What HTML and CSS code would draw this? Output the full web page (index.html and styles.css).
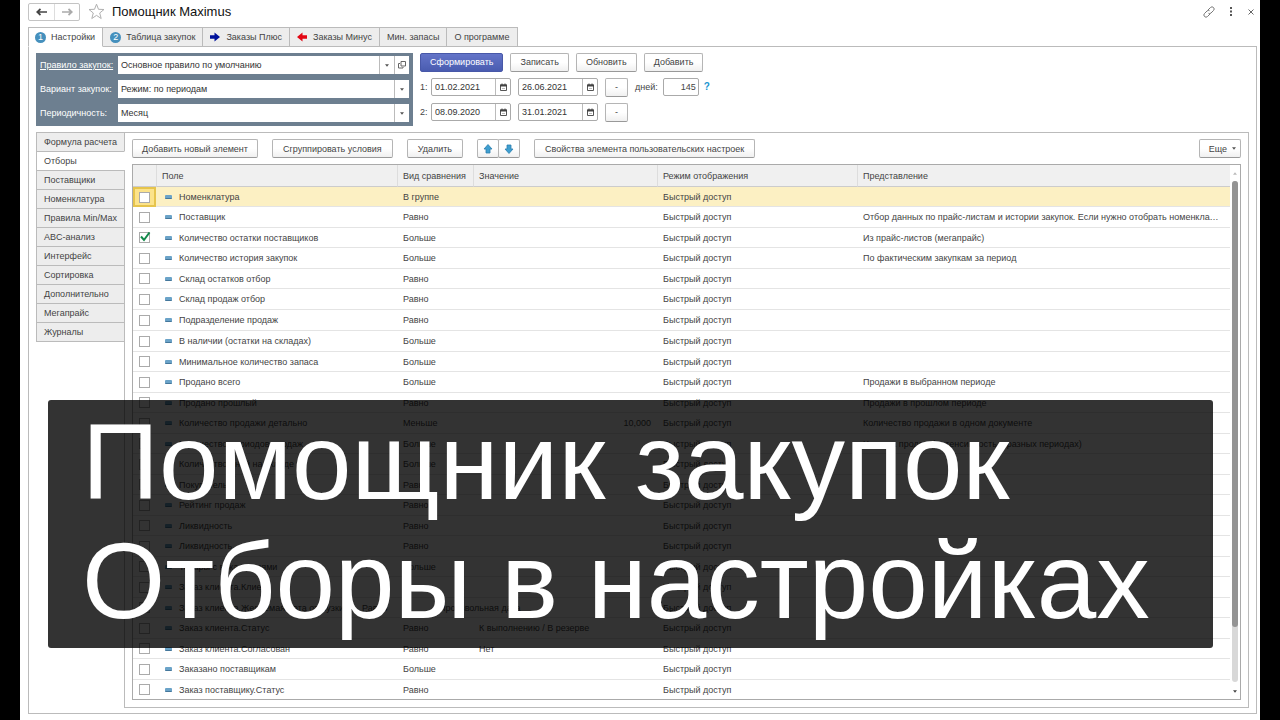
FILE: index.html
```html
<!DOCTYPE html>
<html lang="ru">
<head>
<meta charset="utf-8">
<title>Помощник Maximus</title>
<link rel="stylesheet" href="styles.css">
</head>
<body>
<svg class="defs" aria-hidden="true">
  <symbol id="caret" viewBox="0 0 5 3"><path d="M0 0h5L2.5 3z" fill="currentColor"/></symbol>
  <symbol id="cal" viewBox="0 0 9 9"><path d="M1.500 2h6v5.500h-6z" fill="#fff" stroke="#555"/><path d="M1 1.500h7v2H1z" fill="#444"/><path d="M3 .5v2M6 .5v2" stroke="#444"/><path d="M3 5.500h3" stroke="#bbb"/></symbol>
  <symbol id="up" viewBox="0 0 10 10"><path d="M5 .5 9 5H7v4H3V5H1z" fill="#3f9fd0" stroke="#2b7fae" stroke-width=".8"/></symbol>
  <symbol id="arrow" viewBox="0 0 10 10"><path d="M0 3.200h4.500V.5L10 5 4.500 9.500V6.800H0z" fill="currentColor"/></symbol>
  <symbol id="nav" viewBox="0 0 11 8"><path d="M1 4h10M4.500 1 1.200 4l3.300 3" fill="none" stroke="currentColor" stroke-width="1.700"/></symbol>
</svg>
<div class="app">
  <header class="title-bar">
    <div class="nav-group">
      <button class="nav" aria-label="Назад"><svg class="i-nav"><use href="#nav"/></svg></button>
      <button class="nav nav-off" aria-label="Вперед"><svg class="i-nav flip"><use href="#nav"/></svg></button>
    </div>
    <svg class="star" viewBox="0 0 17 17"><path d="M8.500 1.200 10.500 6.300 16 6.500 11.700 10 13.200 15.500 8.500 12.400 3.800 15.500 5.300 10 1 6.500 6.500 6.300z" fill="#fff" stroke="#b0b0b0"/></svg>
    <h1>Помощник Maximus</h1>
    <div class="window-tools">
      <button class="tool" aria-label="Ссылка"><svg class="i-link" viewBox="0 0 12 12" fill="none" stroke="#777"><path d="M5 4 7.500 1.500a2.100 2.100 0 0 1 3 3L8 7a2 2 0 0 1-2.500.3M7 8 4.500 10.500a2.100 2.100 0 0 1-3-3L4 5a2 2 0 0 1 2.500-.3"/></svg></button>
      <button class="tool" aria-label="Меню"><svg class="i-more" viewBox="0 0 3 10" fill="#555"><path d="M0 0h2v2H0zM0 3.500h2v2H0zM0 7h2v2H0z"/></svg></button>
      <button class="tool" aria-label="Закрыть"><svg class="i-close" viewBox="0 0 6 6"><path d="m.5.5 5 5m0-5-5 5" stroke="#666"/></svg></button>
    </div>
  </header>
  <nav class="tabs" role="tablist">
    <button class="tab tab-on" role="tab"><span class="num">1</span>Настройки</button>
    <button class="tab" role="tab"><span class="num">2</span>Таблица закупок</button>
    <button class="tab" role="tab"><svg class="i-arrow blue"><use href="#arrow"/></svg>Заказы Плюс</button>
    <button class="tab" role="tab"><svg class="i-arrow red flip"><use href="#arrow"/></svg>Заказы Минус</button>
    <button class="tab" role="tab">Мин. запасы</button>
    <button class="tab" role="tab">О программе</button>
  </nav>
  <main class="page">
    <section class="settings">
      <div class="rules">
        <label class="link" for="rule">Правило закупок:</label>
        <div class="combo">
          <input id="rule" type="text" value="Основное правило по умолчанию">
          <button class="cell" aria-label="Выбрать"><svg class="i-caret"><use href="#caret"/></svg></button>
          <button class="cell" aria-label="Открыть"><svg class="i-open" viewBox="0 0 8 8" fill="none" stroke="#666"><path d="M3 .5h4.500V5H3zM2 2.500H.5v4.500H5V6"/></svg></button>
        </div>
        <label for="variant">Вариант закупок:</label>
        <div class="pick"><select id="variant"><option>Режим: по периодам</option></select><svg class="i-caret"><use href="#caret"/></svg></div>
        <label for="period">Периодичность:</label>
        <div class="pick"><select id="period"><option>Месяц</option></select><svg class="i-caret"><use href="#caret"/></svg></div>
      </div>
      <div class="actions">
        <div class="line top-line">
          <button class="btn primary">Сформировать</button>
          <button class="btn">Записать</button>
          <button class="btn">Обновить</button>
          <button class="btn">Добавить</button>
        </div>
        <div class="line">
          <label class="idx" for="d1">1:</label>
          <div class="date"><input id="d1" type="text" value="01.02.2021"><button class="cell" aria-label="Календарь"><svg class="i-cal"><use href="#cal"/></svg></button></div>
          <div class="date"><input type="text" aria-label="Конец периода 1" value="26.06.2021"><button class="cell" aria-label="Календарь"><svg class="i-cal"><use href="#cal"/></svg></button></div>
          <button class="btn dash">-</button>
          <label class="days" for="days">дней:</label>
          <input class="count" id="days" type="text" value="145">
          <button class="help">?</button>
        </div>
        <div class="line">
          <label class="idx" for="d2">2:</label>
          <div class="date"><input id="d2" type="text" value="08.09.2020"><button class="cell" aria-label="Календарь"><svg class="i-cal"><use href="#cal"/></svg></button></div>
          <div class="date"><input type="text" aria-label="Конец периода 2" value="31.01.2021"><button class="cell" aria-label="Календарь"><svg class="i-cal"><use href="#cal"/></svg></button></div>
          <button class="btn dash">-</button>
        </div>
      </div>
    </section>
    <section class="work">
      <nav class="side">
        <button class="side-tab">Формула расчета</button>
        <button class="side-tab side-on">Отборы</button>
        <button class="side-tab">Поставщики</button>
        <button class="side-tab">Номенклатура</button>
        <button class="side-tab">Правила Min/Max</button>
        <button class="side-tab">ABC-анализ</button>
        <button class="side-tab">Интерфейс</button>
        <button class="side-tab">Сортировка</button>
        <button class="side-tab">Дополнительно</button>
        <button class="side-tab">Мегапрайс</button>
        <button class="side-tab">Журналы</button>
      </nav>
      <div class="panel">
        <div class="toolbar">
          <button class="btn">Добавить новый элемент</button>
          <button class="btn">Сгруппировать условия</button>
          <button class="btn">Удалить</button>
          <div class="move">
            <button class="btn" aria-label="Вверх"><svg class="i-move"><use href="#up"/></svg></button>
            <button class="btn" aria-label="Вниз"><svg class="i-move down"><use href="#up"/></svg></button>
          </div>
          <button class="btn">Свойства элемента пользовательских настроек</button>
          <button class="btn more">Еще <svg class="i-caret"><use href="#caret"/></svg></button>
        </div>
        <div class="grid">
          <div class="view">
            <table>
              <colgroup><col class="c-check"><col class="c-field"><col class="c-kind"><col class="c-value"><col class="c-mode"><col></colgroup>
              <thead><tr><th></th><th>Поле</th><th>Вид сравнения</th><th>Значение</th><th>Режим отображения</th><th>Представление</th></tr></thead>
              <tbody id="rows"></tbody>
            </table>
          </div>
          <div class="scroll">
            <svg class="i-scroll faint flip-y"><use href="#caret"/></svg>
            <div class="track"><div class="thumb"></div></div>
            <svg class="i-scroll"><use href="#caret"/></svg>
          </div>
        </div>
      </div>
    </section>
  </main>
</div>
<div class="caption">Помощник закупок<br>Отборы в настройках</div>
<script src="rows.js"></script>
</body>
</html>
```
FILE: styles.css
```css
* { box-sizing: border-box; }
body { margin: 0; padding: 0 20px; background: #000; font: 9px/12px "Liberation Sans", Arial, sans-serif; color: #444; }
button, input, select { font: inherit; color: inherit; margin: 0; padding: 0; border: 0; background: none; border-radius: 0; }
svg { display: block; flex: none; }
.defs { position: absolute; width: 0; height: 0; }
.app { display: flex; flex-direction: column; height: 100vh; padding: 0 3px 6px 8px; background: #fff; }
.flip { transform: scaleX(-1); }
.flip-y, .down { transform: scaleY(-1); }

.title-bar { display: flex; align-items: center; height: 27px; padding: 0 3px 4px 0; }
.nav-group { display: flex; height: 18px; border: 1px solid #c4c4c4; border-radius: 2px; }
.nav { display: flex; align-items: center; justify-content: center; width: 25px; color: #444; }
.nav + .nav { border-left: 1px solid #ddd; }
.nav-off { color: #aaa; }
.i-nav { width: 11px; height: 8px; }
.star { width: 17px; height: 17px; margin: 0 7px 0 8px; }
h1 { margin: 0; font-size: 13px; line-height: 16px; font-weight: 400; color: #111; }
.window-tools { display: flex; align-items: center; gap: 15px; margin-left: auto; }
.i-link { width: 12px; height: 12px; }
.i-more { width: 3px; height: 10px; }
.i-close { width: 6px; height: 6px; }

.tabs { position: relative; z-index: 1; display: flex; height: 20px; }
.tab { display: flex; align-items: center; gap: 5px; padding: 0 7px; border: solid #bbb; border-width: 1px 1px 1px 0; background: #ededed; white-space: nowrap; }
.tab-on { padding-left: 6px; border-left-width: 1px; border-bottom-color: #fff; background: #fff; }
.num { width: 11px; height: 11px; border-radius: 50%; background: #4590bd; color: #fff; line-height: 11px; text-align: center; }
.i-arrow { width: 10px; height: 10px; }
.tab .i-arrow { margin-right: 1px; }
.blue { color: #00129b; }
.red { color: #e30613; }

.page { flex: 1; display: flex; flex-direction: column; min-height: 0; margin-top: -1px; padding: 6px 7px 5px; border: 1px solid #bbb; }
.settings { display: flex; gap: 7px; height: 79px; }
.rules { display: grid; grid-template-columns: 78px 291px; grid-template-rows: repeat(3, 18px); gap: 6px 0; align-items: center; align-self: flex-start; padding: 3px 4px 4px; background: #6d7f90; color: #fff; }
.link { text-decoration: underline; }
.combo, .pick, .date { display: grid; height: 18px; background: #fff; color: #333; }
.combo { grid-template-columns: 1fr 15px 15px; }
.combo input, .pick select, .date input { min-width: 0; width: 100%; padding: 0 3px; }
.cell { display: flex; align-items: center; justify-content: center; border-left: 1px solid #bbb; }
.pick { grid-template-columns: 1fr 15px; align-items: center; }
.pick select { grid-area: 1 / 1 / 2 / 3; height: 18px; appearance: none; }
.pick .i-caret { grid-area: 1 / 2; width: 15px; height: 18px; padding: 8px 5px 7px; border-left: 1px solid #bbb; pointer-events: none; }
.i-caret { width: 5px; height: 3px; color: #555; }
.combo .i-caret { width: 4px; }
.i-open { width: 8px; height: 8px; }
.actions { display: flex; flex-direction: column; gap: 7px; }
.line { display: flex; align-items: center; height: 18px; }
.top-line { gap: 7px; }
.btn { display: flex; align-items: center; justify-content: center; height: 19px; padding: 0 9px; border: 1px solid #b5b5b5; border-bottom-color: #999; border-radius: 2px; background: linear-gradient(#fff 50%, #f0f0f0); color: #444; white-space: nowrap; }
.primary { border-color: #4858a8; background: linear-gradient(#6374c8, #4a5cb0); color: #fff; }
.idx { width: 11px; }
.date { grid-template-columns: 1fr 15px; width: 80px; margin-right: 7px; border: 1px solid #aaa; border-radius: 2px; }
.i-cal { width: 9px; height: 9px; }
.dash { width: 23px; padding: 0; }
.days { margin: 0 5px 0 7px; }
.count { width: 36px; height: 18px; padding: 0 2px; border: 1px solid #aaa; border-radius: 2px; text-align: right; }
.help { margin-left: 5px; color: #1b96d1; font-weight: 700; font-size: 10px; }

.work { flex: 1; display: flex; min-height: 0; }
.side { position: relative; z-index: 1; display: flex; flex-direction: column; width: 89px; margin-right: -1px; }
.side-tab { height: 20px; margin-bottom: -1px; padding: 0 7px; border: 1px solid #bbb; background: #ededed; text-align: left; white-space: nowrap; }
.side-on { border-right-color: #fff; background: #fff; }
.panel { flex: 1; display: flex; flex-direction: column; min-width: 0; padding: 6px 7px 7px; border: 1px solid #bbb; }
.toolbar { display: flex; gap: 14px; height: 25px; }
.toolbar .btn { padding: 0 10px; }
.toolbar .btn:first-child { padding: 0 9px; }
.move { display: flex; }
.move .btn, .move .btn:first-child { width: 22px; padding: 0; }
.move .btn + .btn { margin-left: -1px; }
.i-move { width: 10px; height: 10px; }
.toolbar .more { gap: 5px; margin-left: auto; padding: 0 4px 0 9px; }
.more .i-caret { width: 4px; }
.grid { flex: 1; display: flex; min-height: 0; border: 1px solid #aaa; }
.view { flex: 1; min-width: 0; overflow: hidden; }
table { width: 100%; table-layout: fixed; border-collapse: separate; border-spacing: 0; }
.c-check { width: 23px; }
.c-field { width: 241px; }
.c-kind { width: 76px; }
.c-value { width: 184px; }
.c-mode { width: 200px; }
th, td { padding: 0 6px; overflow: hidden; text-align: left; text-overflow: ellipsis; white-space: nowrap; font-weight: 400; border-bottom: 1px solid #e4e4e4; }
th { height: 22px; background: #f0f0f0; border-bottom-color: #ccc; }
th + th { border-left: 1px solid #ddd; padding-left: 5px; }
td { height: 20px; }
tr:nth-child(even) td, tr:nth-child(7) td { height: 21px; }
td:first-child { padding: 0 0 0 6px; }
td:last-child { padding-right: 9px; }
tr.current td { background: #fcf0c3; }
tr.current td:first-child { border: 2px solid #e6c44c; padding-left: 4px; background: #fce38a; }
td input { width: 11px; height: 11px; appearance: none; border: 1px solid #aaa; background: #fff; }
.tick { display: grid; width: 12px; }
.tick > * { grid-area: 1 / 1; }
.i-tick { width: 12px; height: 12px; pointer-events: none; }
.name { display: flex; align-items: center; gap: 7px; padding-left: 3px; }
.name::before { content: ""; width: 7px; height: 3px; border-radius: 1px; background: #6ba3c8; border-bottom: 1px solid #44779b; }
.joined { display: grid; grid-template-columns: 200px 77px 1fr; }
.right { text-align: right; }
.scroll { display: flex; flex-direction: column; align-items: center; width: 10px; padding: 7px 0 6px; }
.i-scroll { width: 4px; height: 3px; color: #444; }
.faint { color: #bbb; }
.track { flex: 1; width: 6px; margin: 6px 0 8px; border-radius: 3px; background: #d8d8d8; }
.thumb { height: 89%; border-radius: 3px; background: #949494; }

.caption { position: absolute; left: 48px; right: 67px; top: 400px; padding: 3px 34px 7px; border-radius: 3px; background: rgba(0, 0, 0, .8); color: #fff; font-size: 107px; line-height: 119px; white-space: nowrap; }
```
FILE: rows.js
```js
const rows = [
  ["Номенклатура", "В группе"],
  ["Поставщик", "Равно", "", "Отбор данных по прайс-листам и истории закупок. Если нужно отобрать номенклатуру"],
  ["Количество остатки поставщиков", "Больше", "", "Из прайс-листов (мегапрайс)"],
  ["Количество история закупок", "Больше", "", "По фактическим закупкам за период"],
  ["Склад остатков отбор", "Равно"],
  ["Склад продаж отбор", "Равно"],
  ["Подразделение продаж", "Равно"],
  ["В наличии (остатки на складах)", "Больше"],
  ["Минимальное количество запаса", "Больше"],
  ["Продано всего", "Больше", "", "Продажи в выбранном периоде"],
  ["Продано прошлый", "Равно", "", "Продажи в прошлом периоде"],
  ["Количество продажи детально", "Меньше", "10,000", "Количество продажи в одном документе"],
  ["Количество периодов продаж", "Больше", "", "Частота продаж (интенсивность в разных периодах)"],
  ["Количество дней на складе", "Больше"],
  ["Покупатель", "Равно"],
  ["Рейтинг продаж", "Равно"],
  ["Ликвидность", "Равно"],
  ["Ликвидность", "Равно"],
  ["Товары с показателями", "Больше"],
  ["Заказ клиента.Клиент", "Равно"],
  ["Заказ клиента.Желаемая дата отгрузки", "Равно", "Произвольная дата"],
  ["Заказ клиента.Статус", "Равно", "К выполнению / В резерве"],
  ["Заказ клиента.Согласован", "Равно", "Нет"],
  ["Заказано поставщикам", "Больше"],
  ["Заказ поставщику.Статус", "Равно"]
];
const joinedRow = 20;
const tick = '<svg class="i-tick" viewBox="0 0 12 12"><path d="M2 4.500 5 8l5.500-7.500" fill="none" stroke="#12894a" stroke-width="2"/></svg>';
const cells = (name, kind, value, i) => i === joinedRow
  ? `<td colspan="3"><span class="joined"><span class="name">${name}</span><span>${kind}</span><span>${value}</span></span></td>`
  : `<td><span class="name">${name}</span></td><td>${kind}</td><td class="${i === 11 ? "right" : ""}">${value}</td>`;
document.getElementById("rows").innerHTML = rows.map(([name, kind, value = "", note = ""], i) =>
  `<tr class="${i === 0 ? "current" : ""}"><td><span class="tick"><input type="checkbox" aria-label="${name}"${i === 2 ? " checked" : ""}>${i === 2 ? tick : ""}</span></td>` +
  cells(name, kind, value, i) + `<td>Быстрый доступ</td><td>${note}</td></tr>`
).join("");
```
